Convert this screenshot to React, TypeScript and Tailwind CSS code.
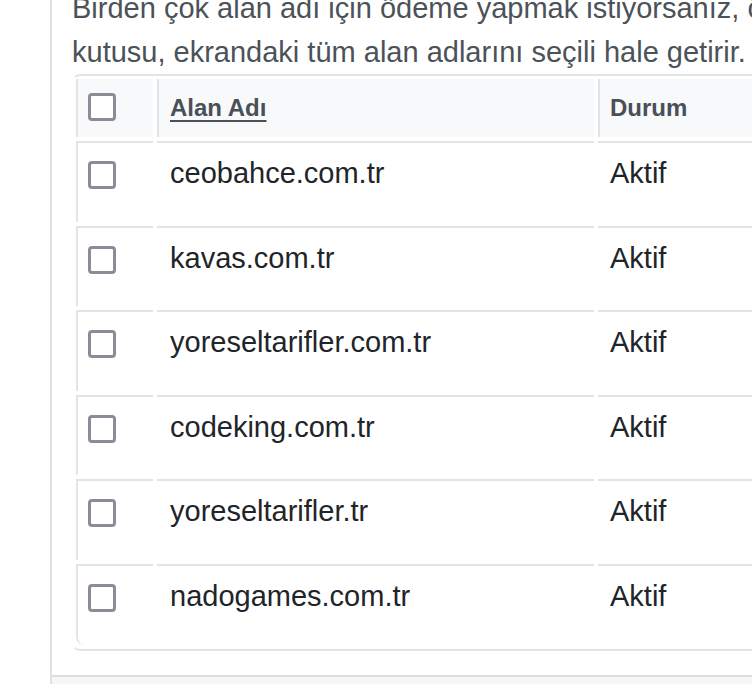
import React from 'react';

const domains = [
  'ceobahce.com.tr',
  'kavas.com.tr',
  'yoreseltarifler.com.tr',
  'codeking.com.tr',
  'yoreseltarifler.tr',
  'nadogames.com.tr',
];

function Box() {
  return (
    <input
      type="checkbox"
      className="block appearance-none w-[28px] h-[28px] m-0 border-[3px] border-[#8e8b99] rounded-[4px] bg-white"
    />
  );
}

export default function App() {
  return (
    <div
      className="w-[752px] h-[684px] overflow-hidden bg-white"
      style={{ fontFamily: '"Liberation Sans", Arial, sans-serif' }}
    >
      <div className="ml-[50px] w-[1200px] h-full border-l-2 border-[#dee2e6] flex flex-col">
        <div className="pl-[20px] pr-[20px]">
          <p className="-mt-[13px] text-[29px] leading-[1.5] text-[#4b5259] whitespace-nowrap">
            Birden çok alan adı için ödeme yapmak istiyorsanız, ödemek istediğiniz alan adlarını seçin. Tablo başlığındaki onay
            <br />
            kutusu, ekrandaki tüm alan adlarını seçili hale getirir.
          </p>

          <div className="rounded-lg border-2 border-[#e3e4e6] border-l-transparent pt-[3px] pb-[4px] pl-[2px]">
            {/* header */}
            <div className="grid grid-cols-[77px_437px_400px] gap-x-[4px] h-[58px]">
              <div className="bg-[#f8f9fa] border-l-2 border-[#e3e4e6] pl-[10px] pt-[14px]">
                <Box />
              </div>
              <div className="bg-[#f8f9fa] border-l-2 border-[#e0e2e5] pl-[11px] flex items-center">
                <a className="text-[24px] font-bold text-[#495057] underline decoration-2 underline-offset-[4px]">
                  Alan Adı
                </a>
              </div>
              <div className="bg-[#f8f9fa] border-l-2 border-[#e0e2e5] pl-[10px] flex items-center">
                <span className="text-[24px] font-bold text-[#495057]">Durum</span>
              </div>
            </div>

            {/* body */}
            <div className="mt-[4px] flex flex-col gap-y-[4px]">
              {domains.map((d, i) => (
                <div key={d} className="grid grid-cols-[77px_437px_400px] gap-x-[4px] h-[80.6px]">
                  <div
                    className={`border-t-2 border-l-2 border-[#e3e4e6] pl-[10px] pt-[18px] ${
                      i === domains.length - 1 ? 'rounded-bl-lg' : ''
                    }`}
                  >
                    <Box />
                  </div>
                  <div className="border-t-2 border-[#e3e4e6] pl-[13px] pt-[9px] text-[29px] leading-[1.5] text-[#212529]">
                    {d}
                  </div>
                  <div className="border-t-2 border-[#e3e4e6] pl-[12px] pt-[9px] text-[29px] leading-[1.5] text-[#212529]">
                    Aktif
                  </div>
                </div>
              ))}
            </div>
          </div>
        </div>

        <div className="mt-[24px] flex-1 border-t-2 border-[#dcdddf] bg-[#f6f6f7]" />
      </div>
    </div>
  );
}
